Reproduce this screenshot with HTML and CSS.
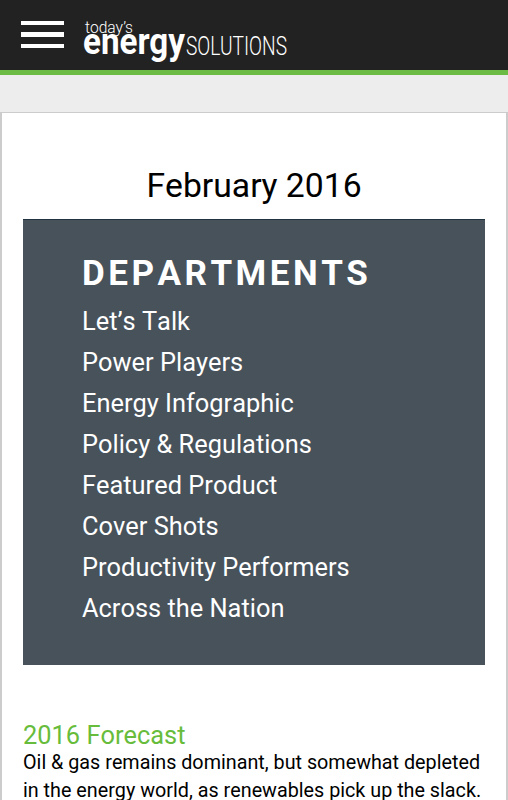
FILE: index.html
```html
<!DOCTYPE html>
<html>

<head>
    <meta charset="utf-8">
    <title>Today's Energy Solutions</title>
    <link rel="stylesheet" href="styles.css">
</head>

<body>
    <header class="top-bar">
        <button type="button" class="menu-btn" aria-label="Menu">
            <span></span>
            <span></span>
            <span></span>
        </button>
        <svg class="logo" width="210" height="50" viewBox="0 0 210 50">
            <text class="logo-today" x="2" y="17" textLength="48" lengthAdjust="spacingAndGlyphs">today’s</text>
            <text class="logo-energy" x="0" y="38" textLength="102" lengthAdjust="spacingAndGlyphs">energy</text>
            <text class="logo-solutions" x="103" y="38.5" textLength="101" lengthAdjust="spacingAndGlyphs">SOLUTIONS</text>
        </svg>
    </header>

    <main class="content">
        <h1>February 2016</h1>

        <div class="departments">
            <h2>DEPARTMENTS</h2>
            <ul>
                <li>Let’s Talk</li>
                <li>Power Players</li>
                <li>Energy Infographic</li>
                <li>Policy &amp; Regulations</li>
                <li>Featured Product</li>
                <li>Cover Shots</li>
                <li>Productivity Performers</li>
                <li>Across the Nation</li>
            </ul>
        </div>

        <div class="article">
            <h3>2016 Forecast</h3>
            <p>Oil &amp; gas remains dominant, but somewhat depleted in the energy world, as renewables pick up the slack.</p>
        </div>
    </main>
</body>

</html>
```

FILE: styles.css
```css
* {
    box-sizing: border-box;
}

body {
    margin: 0;
    height: 800px;
    overflow: hidden;
    background: #ededed;
    font-family: Roboto, sans-serif;
    font-kerning: none;
    color: #000;
}

.top-bar {
    display: flex;
    height: 75px;
    padding: 16px 0 0 21px;
    background: #222;
    border-bottom: 5px solid #6cbb45;
}

.menu-btn {
    display: flex;
    flex-direction: column;
    gap: 7px;
    width: 43px;
    height: 40px;
    margin: 0;
    padding: 5px 0 0;
    border: 0;
    background: none;
}

.menu-btn span {
    width: 43px;
    height: 4.4px;
    background: #fff;
}

.logo {
    margin-left: 19px;
    fill: #fff;
}

.logo-today {
    font: 300 16.5px Roboto, sans-serif;
}

.logo-energy {
    font: 700 36px Roboto, sans-serif;
}

.logo-solutions {
    font: 300 26px Roboto, sans-serif;
}

.content {
    height: 720px;
    margin-top: 37px;
    padding: 53px 21px 0;
    background: #fff;
    border: 1px solid #ccc;
    border-width: 1px 2px;
}

h1 {
    margin: 0;
    font-size: 33.7px;
    line-height: 40px;
    font-weight: 400;
    text-align: center;
}

.departments {
    height: 446px;
    margin-top: 13px;
    padding: 33px 59px 0;
    background: #47525b;
    border-top: 1px solid #21333f;
    color: #fff;
}

h2 {
    margin: 0;
    font-size: 35px;
    line-height: 42px;
    font-weight: 700;
    letter-spacing: 3.5px;
}

ul {
    margin: 6px 0 0;
    padding: 0;
    list-style: none;
    font-size: 25.4px;
    line-height: 41px;
}

.article {
    margin-top: 56px;
}

h3 {
    margin: 0;
    color: #67bc3b;
    font-size: 25.4px;
    line-height: 28px;
    font-weight: 400;
}

p {
    margin: 0;
    font-size: 19.75px;
    line-height: 28px;
}
```
